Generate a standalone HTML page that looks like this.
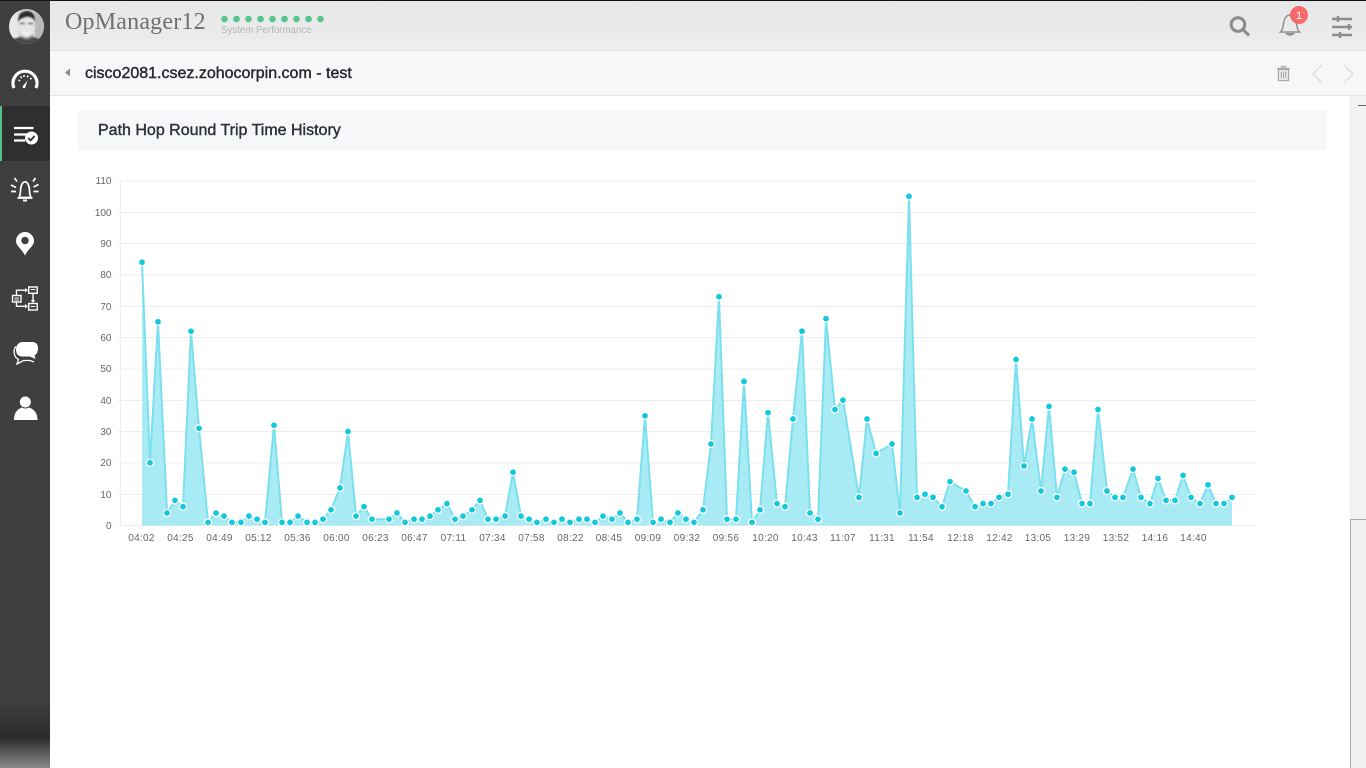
<!DOCTYPE html>
<html><head><meta charset="utf-8"><style>
html,body{margin:0;padding:0;width:1366px;height:768px;overflow:hidden;background:#fff;font-family:"Liberation Sans",sans-serif}
div{position:absolute;box-sizing:border-box}
svg{position:absolute;left:0;top:0}
</style></head><body>
<div style="left:50px;top:0;width:1316px;height:51px;background:linear-gradient(#e6e7e8,#ecedee);border-bottom:1px solid #e2e3e5"></div>
<div style="left:50px;top:51px;width:1316px;height:45px;background:#f6f7f9;border-bottom:1px solid #e2e4e6"></div>
<div style="left:0;top:0;width:50px;height:768px;background:linear-gradient(#3f3f3f 0,#3f3f3f 700px,#2b2b2b 738px,#8a8a8a 768px)"></div>
<div style="left:0;top:106px;width:50px;height:55px;background:#2f2f2f;border-left:2px solid #4fc38a"></div>
<div style="left:0;top:0;width:1366px;height:1px;background:#111"></div>
<div style="left:65px;top:9px;font:24px 'Liberation Serif',serif;color:#707070;letter-spacing:.2px;white-space:nowrap">OpManager12</div>
<div style="left:221px;top:25px;font:9.700px 'Liberation Sans',sans-serif;color:#b4b4b4;white-space:nowrap">System Performance</div>
<div style="left:85px;top:65px;font:16px 'Liberation Sans',sans-serif;color:#25282c;-webkit-text-stroke:.4px #25282c;white-space:nowrap">cisco2081.csez.zohocorpin.com - test</div>
<div style="left:78px;top:110px;width:1249px;height:40px;background:#f6f7f9"></div>
<div style="left:98px;top:122px;font:16px 'Liberation Sans',sans-serif;color:#2a2f38;-webkit-text-stroke:.4px #2a2f38;white-space:nowrap">Path Hop Round Trip Time History</div>
<div style="left:1350px;top:96px;width:16px;height:672px;background:#f3f3f3;border-left:1px solid #ececec"></div>
<div style="left:1358px;top:105px;width:8px;height:1px;background:#666"></div>
<div style="left:1350px;top:519px;width:16px;height:249px;background:#f1f1f1;border-left:1px solid #aaa;border-top:1px solid #aaa"></div>

<svg width="1366" height="768" viewBox="0 0 1366 768">
<defs>
<clipPath id="ac"><circle cx="26.500" cy="26.500" r="17.500"/></clipPath>
<filter id="bl"><feGaussianBlur stdDeviation=".8"/></filter>
</defs>
<!-- avatar -->
<g clip-path="url(#ac)"><rect x="9" y="9" width="35" height="35" fill="#d4d4d4"/>
<g filter="url(#bl)"><rect x="9" y="9" width="9" height="35" fill="#e8e8e8"/><rect x="35" y="9" width="9" height="35" fill="#b9b9b9"/>
<path d="M9 46l2-7 9-2h14l9 3 2 6z" fill="#4a4a4a"/><ellipse cx="26.500" cy="27" rx="8" ry="12" fill="#e4e4e4"/>
<path d="M18 22c-1-7 4-11 9-11s9 4 8 11c-1-3-4-5-8-5-4 1-7 2-9 5z" fill="#2e2e2e"/>
<path d="M20 23.500h5M28 23.500h5" stroke="#555" stroke-width="1.500"/>
<path d="M21 32q6 4 12 0q-6 1.500-12 0z" fill="#fff"/><path d="M20 34q6 7 13 0l-1 4-5 2-5-2z" fill="#888"/></g></g>
<!-- status dots -->
<g fill="#55c48c"><circle cx="224.500" cy="19" r="3.300"/><circle cx="236.500" cy="19" r="3.300"/><circle cx="248.500" cy="19" r="3.300"/><circle cx="260.500" cy="19" r="3.300"/><circle cx="272.500" cy="19" r="3.300"/><circle cx="284.500" cy="19" r="3.300"/><circle cx="296.500" cy="19" r="3.300"/><circle cx="308.500" cy="19" r="3.300"/><circle cx="320.500" cy="19" r="3.300"/></g>
<!-- gauge -->
<path d="M14 88A12 12 0 1 1 36 88" fill="none" stroke="#fff" stroke-width="3.200"/>
<path d="M18.500 80l1.500 1M20.500 76.500l1.200 1.500M24 75v2M28 75.500l-.7 1.800M31.500 78l-1.300 1.300" stroke="#fff" stroke-width="1.500"/>
<path d="M27.500 80.500l-5 6 .6 1.500 1.900.3z" fill="#fff"/>
<!-- list -->
<path d="M14 128h19.500M14 134.500h13M14 140.500h11" stroke="#fff" stroke-width="2.200"/>
<circle cx="31.500" cy="138" r="6.500" fill="#fff"/><path d="M28.300 138l2.300 2.400 4-4.400" fill="none" stroke="#2f2f2f" stroke-width="1.800"/>
<!-- alarm -->
<g fill="none" stroke="#fff" stroke-width="1.700"><path d="M19 197.500c1.500-2 1.300-5 1.700-9 .4-3.500 2-6.700 4.300-6.700s3.900 3.200 4.300 6.700c.4 4 .2 7 1.700 9z"/><path d="M17.500 198h15"/><path d="M23 200.500h4" stroke-width="2"/><path d="M11 185l5 2.500M11 191.500h5M14.500 178l2.500 3.500M35.500 178l-2.500 3.500M38.500 184.500l-5 2.500M38.500 191.500h-5"/></g>
<!-- pin -->
<path d="M25 255.500c-3-6.500-9-9.500-9-14.500a9 9 0 0 1 18 0c0 5-6 8-9 14.500z" fill="#fff"/><circle cx="25" cy="240.500" r="3.700" fill="#3f3f3f"/>
<!-- network -->
<g fill="none" stroke="#fff" stroke-width="1.400"><rect x="12.500" y="295.500" width="8.500" height="6.500"/><rect x="28.700" y="287" width="8.500" height="6.300"/><rect x="28.700" y="303.500" width="8.500" height="6.500"/><path d="M16.500 295v-4.800h9M16.500 302v4.300h9M33 293.500v8"/><path d="M14.500 298h4.500M14.500 300h4.500M30.700 289.500h4.500M30.700 306.500h4.500" stroke-width="1"/></g>
<path d="M25 288l3 2.200-3 2.200zM25 304l3 2.300-3 2.300zM30.800 300l2.200 3 2.200-3z" fill="#fff"/>
<!-- chat -->
<path d="M22.500 342h10c3.500 0 5.500 2.500 5.500 6s-1 6-3.500 7.500l1 3.500-5.500-2.500h-8c-3.500 0-6-2.500-6-7s3-7.500 6.500-7.500z" fill="#fff"/>
<path d="M16 346.500c-2 2-2.300 5-1.500 8s2.500 4.300 4 5l-1.500 4.500 6.500-3.500h6.500l4 1.500" fill="none" stroke="#fff" stroke-width="1.300"/>
<!-- person -->
<circle cx="25.300" cy="402" r="5.500" fill="#fff"/><path d="M14 420c0-7 3-10.500 7.500-12.500q4 2 8 0c4.500 2 8 5.500 8 12.500z" fill="#fff"/>
<!-- header icons -->
<circle cx="1238" cy="24.500" r="6.800" fill="none" stroke="#8b8b8b" stroke-width="3"/><path d="M1243 29.500l6 6" stroke="#8b8b8b" stroke-width="3.200"/>
<path d="M1280.500 32c3-3 2.500-7 3.500-11 .8-3.500 3-6 6-6s5 2.500 6 6c1 4 .5 8 3.500 11z" fill="none" stroke="#8f8f8f" stroke-width="1.500"/><path d="M1286 33.500h8q-4 3.500-8 0z" fill="#8f8f8f" stroke="#8f8f8f"/>
<circle cx="1299" cy="15" r="9" fill="#f8696b"/><text x="1299" y="19" font-size="11" fill="#fff" text-anchor="middle" font-family="Liberation Sans">1</text>
<path d="M1332 19h20M1332 27h20M1332 35h20" stroke="#8d8d8d" stroke-width="2.500"/><path d="M1338 16v6M1349 24v6M1340 32v6" stroke="#8d8d8d" stroke-width="2.500"/>
<!-- toolbar icons -->
<g fill="none" stroke="#a9a9a9" stroke-width="1.300"><rect x="1278.500" y="69.500" width="10" height="11"/><path d="M1277 68.500h13M1281.500 68.500v-2h4v2"/><path d="M1281.300 71.500v7M1283.500 71.500v7M1285.700 71.500v7"/></g>
<path d="M1322 65l-9 9 9 9M1344 65l9 9-9 9" fill="none" stroke="#dcdee0" stroke-width="1.500"/>
<path d="M70 68.500v8l-5-4z" fill="#8a8a8a"/>
<!-- grid -->
<g stroke="#eeeeee" stroke-width="1"><path d="M118 181h1138M118 212.500h1138M118 243.500h1138M118 275h1138M118 306.500h1138M118 337.500h1138M118 369h1138M118 400.500h1138M118 431.500h1138M118 463h1138M118 494.500h1138M118 525.500h1138M120.500 181v345"/></g>
<path fill="#a9ebf5" d="M142 525.500L142 262.200 150 462.800 158 321.800 167 513 175 500.400 183 506.700 191 331.200 199 428.300 208 522.400 216 513 224 516.100 232 522.400 241 522.400 249 516.100 257 519.200 265 522.400 274 425.200 282 522.400 290 522.400 298 516.100 307 522.400 315 522.400 323 519.200 331 509.800 340 487.900 348 431.500 356 516.100 364 506.700 372 519.200 389 519.200 397 513 405 522.400 414 519.200 422 519.200 430 516.100 438 509.800 447 503.600 455 519.200 463 516.100 472 509.800 480 500.400 488 519.200 496 519.200 505 516.100 513 472.200 521 516.100 529 519.200 537 522.400 546 519.200 554 522.400 562 519.200 570 522.400 579 519.200 587 519.200 595 522.400 603 516.100 612 519.200 620 513 628 522.400 637 519.200 645 415.800 653 522.400 661 519.200 670 522.400 678 513 686 519.200 694 522.400 703 509.800 711 444 719 296.700 727 519.200 736 519.200 744 381.300 752 522.400 760 509.800 768 412.700 777 503.600 785 506.700 793 419 802 331.200 810 513 818 519.200 826 318.700 835 409.500 843 400.100 859 497.300 867 419 876 453.400 892 444 900 513 909 196.400 917 497.300 925 494.200 933 497.300 942 506.700 950 481.600 966 491 975 506.700 983 503.600 991 503.600 999 497.300 1008 494.200 1016 359.400 1024 466 1032 419 1041 491 1049 406.400 1057 497.300 1065 469.100 1074 472.200 1082 503.600 1090 503.600 1098 409.500 1107 491 1115 497.300 1123 497.300 1133 469.100 1141 497.300 1150 503.600 1158 478.500 1166 500.400 1175 500.400 1183 475.400 1191 497.300 1200 503.600 1208 484.800 1216 503.600 1224 503.600 1232 497.300 1232 525.500Z"/>
<polyline fill="none" stroke="#7be0ee" stroke-width="2" stroke-linejoin="round" points="142 262.200 150 462.800 158 321.800 167 513 175 500.400 183 506.700 191 331.200 199 428.300 208 522.400 216 513 224 516.100 232 522.400 241 522.400 249 516.100 257 519.200 265 522.400 274 425.200 282 522.400 290 522.400 298 516.100 307 522.400 315 522.400 323 519.200 331 509.800 340 487.900 348 431.500 356 516.100 364 506.700 372 519.200 389 519.200 397 513 405 522.400 414 519.200 422 519.200 430 516.100 438 509.800 447 503.600 455 519.200 463 516.100 472 509.800 480 500.400 488 519.200 496 519.200 505 516.100 513 472.200 521 516.100 529 519.200 537 522.400 546 519.200 554 522.400 562 519.200 570 522.400 579 519.200 587 519.200 595 522.400 603 516.100 612 519.200 620 513 628 522.400 637 519.200 645 415.800 653 522.400 661 519.200 670 522.400 678 513 686 519.200 694 522.400 703 509.800 711 444 719 296.700 727 519.200 736 519.200 744 381.300 752 522.400 760 509.800 768 412.700 777 503.600 785 506.700 793 419 802 331.200 810 513 818 519.200 826 318.700 835 409.500 843 400.100 859 497.300 867 419 876 453.400 892 444 900 513 909 196.400 917 497.300 925 494.200 933 497.300 942 506.700 950 481.600 966 491 975 506.700 983 503.600 991 503.600 999 497.300 1008 494.200 1016 359.400 1024 466 1032 419 1041 491 1049 406.400 1057 497.300 1065 469.100 1074 472.200 1082 503.600 1090 503.600 1098 409.500 1107 491 1115 497.300 1123 497.300 1133 469.100 1141 497.300 1150 503.600 1158 478.500 1166 500.400 1175 500.400 1183 475.400 1191 497.300 1200 503.600 1208 484.800 1216 503.600 1224 503.600 1232 497.300"/>
<g fill="#12c8dd" stroke="#fff" stroke-width="1.300">
<circle cx="142" cy="262.200" r="3.500"/><circle cx="150" cy="462.800" r="3.500"/><circle cx="158" cy="321.800" r="3.500"/><circle cx="167" cy="513" r="3.500"/><circle cx="175" cy="500.400" r="3.500"/><circle cx="183" cy="506.700" r="3.500"/><circle cx="191" cy="331.200" r="3.500"/><circle cx="199" cy="428.300" r="3.500"/><circle cx="208" cy="522.400" r="3.500"/><circle cx="216" cy="513" r="3.500"/><circle cx="224" cy="516.100" r="3.500"/><circle cx="232" cy="522.400" r="3.500"/><circle cx="241" cy="522.400" r="3.500"/><circle cx="249" cy="516.100" r="3.500"/><circle cx="257" cy="519.200" r="3.500"/><circle cx="265" cy="522.400" r="3.500"/><circle cx="274" cy="425.200" r="3.500"/><circle cx="282" cy="522.400" r="3.500"/><circle cx="290" cy="522.400" r="3.500"/><circle cx="298" cy="516.100" r="3.500"/><circle cx="307" cy="522.400" r="3.500"/><circle cx="315" cy="522.400" r="3.500"/><circle cx="323" cy="519.200" r="3.500"/><circle cx="331" cy="509.800" r="3.500"/><circle cx="340" cy="487.900" r="3.500"/><circle cx="348" cy="431.500" r="3.500"/><circle cx="356" cy="516.100" r="3.500"/><circle cx="364" cy="506.700" r="3.500"/><circle cx="372" cy="519.200" r="3.500"/><circle cx="389" cy="519.200" r="3.500"/><circle cx="397" cy="513" r="3.500"/><circle cx="405" cy="522.400" r="3.500"/><circle cx="414" cy="519.200" r="3.500"/><circle cx="422" cy="519.200" r="3.500"/><circle cx="430" cy="516.100" r="3.500"/><circle cx="438" cy="509.800" r="3.500"/><circle cx="447" cy="503.600" r="3.500"/><circle cx="455" cy="519.200" r="3.500"/><circle cx="463" cy="516.100" r="3.500"/><circle cx="472" cy="509.800" r="3.500"/><circle cx="480" cy="500.400" r="3.500"/><circle cx="488" cy="519.200" r="3.500"/><circle cx="496" cy="519.200" r="3.500"/><circle cx="505" cy="516.100" r="3.500"/><circle cx="513" cy="472.200" r="3.500"/><circle cx="521" cy="516.100" r="3.500"/><circle cx="529" cy="519.200" r="3.500"/><circle cx="537" cy="522.400" r="3.500"/><circle cx="546" cy="519.200" r="3.500"/><circle cx="554" cy="522.400" r="3.500"/><circle cx="562" cy="519.200" r="3.500"/><circle cx="570" cy="522.400" r="3.500"/><circle cx="579" cy="519.200" r="3.500"/><circle cx="587" cy="519.200" r="3.500"/><circle cx="595" cy="522.400" r="3.500"/><circle cx="603" cy="516.100" r="3.500"/><circle cx="612" cy="519.200" r="3.500"/><circle cx="620" cy="513" r="3.500"/><circle cx="628" cy="522.400" r="3.500"/><circle cx="637" cy="519.200" r="3.500"/><circle cx="645" cy="415.800" r="3.500"/><circle cx="653" cy="522.400" r="3.500"/><circle cx="661" cy="519.200" r="3.500"/><circle cx="670" cy="522.400" r="3.500"/><circle cx="678" cy="513" r="3.500"/><circle cx="686" cy="519.200" r="3.500"/><circle cx="694" cy="522.400" r="3.500"/><circle cx="703" cy="509.800" r="3.500"/><circle cx="711" cy="444" r="3.500"/><circle cx="719" cy="296.700" r="3.500"/><circle cx="727" cy="519.200" r="3.500"/><circle cx="736" cy="519.200" r="3.500"/><circle cx="744" cy="381.300" r="3.500"/><circle cx="752" cy="522.400" r="3.500"/><circle cx="760" cy="509.800" r="3.500"/><circle cx="768" cy="412.700" r="3.500"/><circle cx="777" cy="503.600" r="3.500"/><circle cx="785" cy="506.700" r="3.500"/><circle cx="793" cy="419" r="3.500"/><circle cx="802" cy="331.200" r="3.500"/><circle cx="810" cy="513" r="3.500"/><circle cx="818" cy="519.200" r="3.500"/><circle cx="826" cy="318.700" r="3.500"/><circle cx="835" cy="409.500" r="3.500"/><circle cx="843" cy="400.100" r="3.500"/><circle cx="859" cy="497.300" r="3.500"/><circle cx="867" cy="419" r="3.500"/><circle cx="876" cy="453.400" r="3.500"/><circle cx="892" cy="444" r="3.500"/><circle cx="900" cy="513" r="3.500"/><circle cx="909" cy="196.400" r="3.500"/><circle cx="917" cy="497.300" r="3.500"/><circle cx="925" cy="494.200" r="3.500"/><circle cx="933" cy="497.300" r="3.500"/><circle cx="942" cy="506.700" r="3.500"/><circle cx="950" cy="481.600" r="3.500"/><circle cx="966" cy="491" r="3.500"/><circle cx="975" cy="506.700" r="3.500"/><circle cx="983" cy="503.600" r="3.500"/><circle cx="991" cy="503.600" r="3.500"/><circle cx="999" cy="497.300" r="3.500"/><circle cx="1008" cy="494.200" r="3.500"/><circle cx="1016" cy="359.400" r="3.500"/><circle cx="1024" cy="466" r="3.500"/><circle cx="1032" cy="419" r="3.500"/><circle cx="1041" cy="491" r="3.500"/><circle cx="1049" cy="406.400" r="3.500"/><circle cx="1057" cy="497.300" r="3.500"/><circle cx="1065" cy="469.100" r="3.500"/><circle cx="1074" cy="472.200" r="3.500"/><circle cx="1082" cy="503.600" r="3.500"/><circle cx="1090" cy="503.600" r="3.500"/><circle cx="1098" cy="409.500" r="3.500"/><circle cx="1107" cy="491" r="3.500"/><circle cx="1115" cy="497.300" r="3.500"/><circle cx="1123" cy="497.300" r="3.500"/><circle cx="1133" cy="469.100" r="3.500"/><circle cx="1141" cy="497.300" r="3.500"/><circle cx="1150" cy="503.600" r="3.500"/><circle cx="1158" cy="478.500" r="3.500"/><circle cx="1166" cy="500.400" r="3.500"/><circle cx="1175" cy="500.400" r="3.500"/><circle cx="1183" cy="475.400" r="3.500"/><circle cx="1191" cy="497.300" r="3.500"/><circle cx="1200" cy="503.600" r="3.500"/><circle cx="1208" cy="484.800" r="3.500"/><circle cx="1216" cy="503.600" r="3.500"/><circle cx="1224" cy="503.600" r="3.500"/><circle cx="1232" cy="497.300" r="3.500"/>
</g>
<g font-family="Liberation Sans" font-size="10" fill="#666" text-anchor="end">
<text x="111.500" y="184">110</text><text x="111.500" y="216">100</text><text x="111.500" y="247">90</text><text x="111.500" y="278">80</text><text x="111.500" y="310">70</text><text x="111.500" y="341">60</text><text x="111.500" y="372">50</text><text x="111.500" y="404">40</text><text x="111.500" y="435">30</text><text x="111.500" y="466">20</text><text x="111.500" y="498">10</text><text x="111.500" y="529">0</text>
</g>
<g font-family="Liberation Sans" font-size="10" fill="#666" text-anchor="middle" letter-spacing=".3">
<text x="141.500" y="541">04:02</text><text x="180.500" y="541">04:25</text><text x="219.500" y="541">04:49</text><text x="258.500" y="541">05:12</text><text x="297.500" y="541">05:36</text><text x="336.500" y="541">06:00</text><text x="375.500" y="541">06:23</text><text x="414.500" y="541">06:47</text><text x="453.500" y="541">07:11</text><text x="492.500" y="541">07:34</text><text x="531.500" y="541">07:58</text><text x="570.500" y="541">08:22</text><text x="609" y="541">08:45</text><text x="648" y="541">09:09</text><text x="687" y="541">09:32</text><text x="726" y="541">09:56</text><text x="765.500" y="541">10:20</text><text x="804.500" y="541">10:43</text><text x="843" y="541">11:07</text><text x="882" y="541">11:31</text><text x="921" y="541">11:54</text><text x="960.500" y="541">12:18</text><text x="999.500" y="541">12:42</text><text x="1038" y="541">13:05</text><text x="1077" y="541">13:29</text><text x="1116" y="541">13:52</text><text x="1155" y="541">14:16</text><text x="1193.500" y="541">14:40</text>
</g>
</svg>
</body></html>
